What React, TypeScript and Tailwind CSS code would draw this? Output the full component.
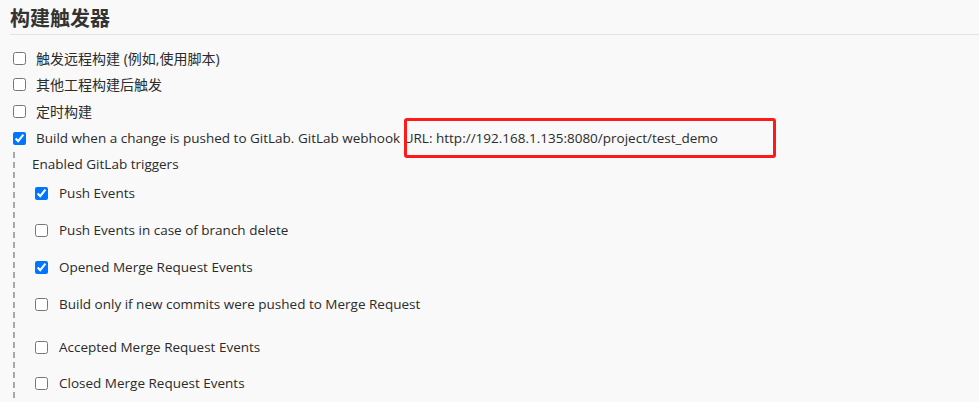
import React from "react";

const font = "font-['Open_Sans','Noto_Sans_CJK_SC',sans-serif]";

function Box({ checked }: { checked?: boolean }) {
  return (
    <input
      type="checkbox"
      defaultChecked={checked}
      className="m-0 w-[13px] h-[13px] shrink-0 accent-[#0075ff]"
    />
  );
}

function TopRow({ label, checked, cjk }: { label: string; checked?: boolean; cjk?: boolean }) {
  return (
    <div className="h-[26.67px] flex items-center pl-[3px]">
      <Box checked={checked} />
      <span className={`ml-[10px] whitespace-nowrap ${cjk ? "text-[14px]" : ""}`}>{label}</span>
    </div>
  );
}

function SubRow({ label, checked, extra, last }: { label: string; checked?: boolean; extra?: boolean; last?: boolean }) {
  return (
    <div className={`${last ? "h-[35px]" : "h-[37px]"} flex items-center pl-[20px] ${extra ? "mb-[6px]" : ""}`}>
      <Box checked={checked} />
      <span className="ml-[11px] whitespace-nowrap">{label}</span>
    </div>
  );
}

export default function App() {
  return (
    <div className={`relative w-[979px] h-[402px] overflow-hidden bg-[#f9f9f9] text-[#2b2b2b] text-[13.5px] ${font}`}>
      <div className="pl-[10px]">
        <h2 className="h-[35px] pt-[6px] text-[20px] font-bold leading-[26px] text-[#333] border-b border-[#e3e3e3]">
          构建触发器
        </h2>
        <div className="pt-[10px]">
          <TopRow cjk label="触发远程构建 (例如,使用脚本)" />
          <TopRow cjk label="其他工程构建后触发" />
          <TopRow cjk label="定时构建" />
          <TopRow
            checked
            label="Build when a change is pushed to GitLab. GitLab webhook URL: http://192.168.1.135:8080/project/test_demo"
          />
        </div>
        <div className="ml-[3px] pl-[2px] pt-[1px] bg-[repeating-linear-gradient(to_bottom,#a8a8a8_0px,#a8a8a8_6px,transparent_6px,transparent_10px)] bg-no-repeat bg-[length:2px_100%] h-[260px]">
          <div className="h-[22px] flex items-center pl-[17px] whitespace-nowrap">Enabled GitLab triggers</div>
          <SubRow checked label="Push Events" />
          <SubRow label="Push Events in case of branch delete" />
          <SubRow checked label="Opened Merge Request Events" />
          <SubRow label="Build only if new commits were pushed to Merge Request" extra />
          <SubRow label="Accepted Merge Request Events" />
          <SubRow label="Closed Merge Request Events" last />
        </div>
      </div>
      <div className="absolute left-[404px] top-[118px] w-[372px] h-[40px] border-[3px] border-[#ff1a1a] rounded-[3px]" />
    </div>
  );
}
